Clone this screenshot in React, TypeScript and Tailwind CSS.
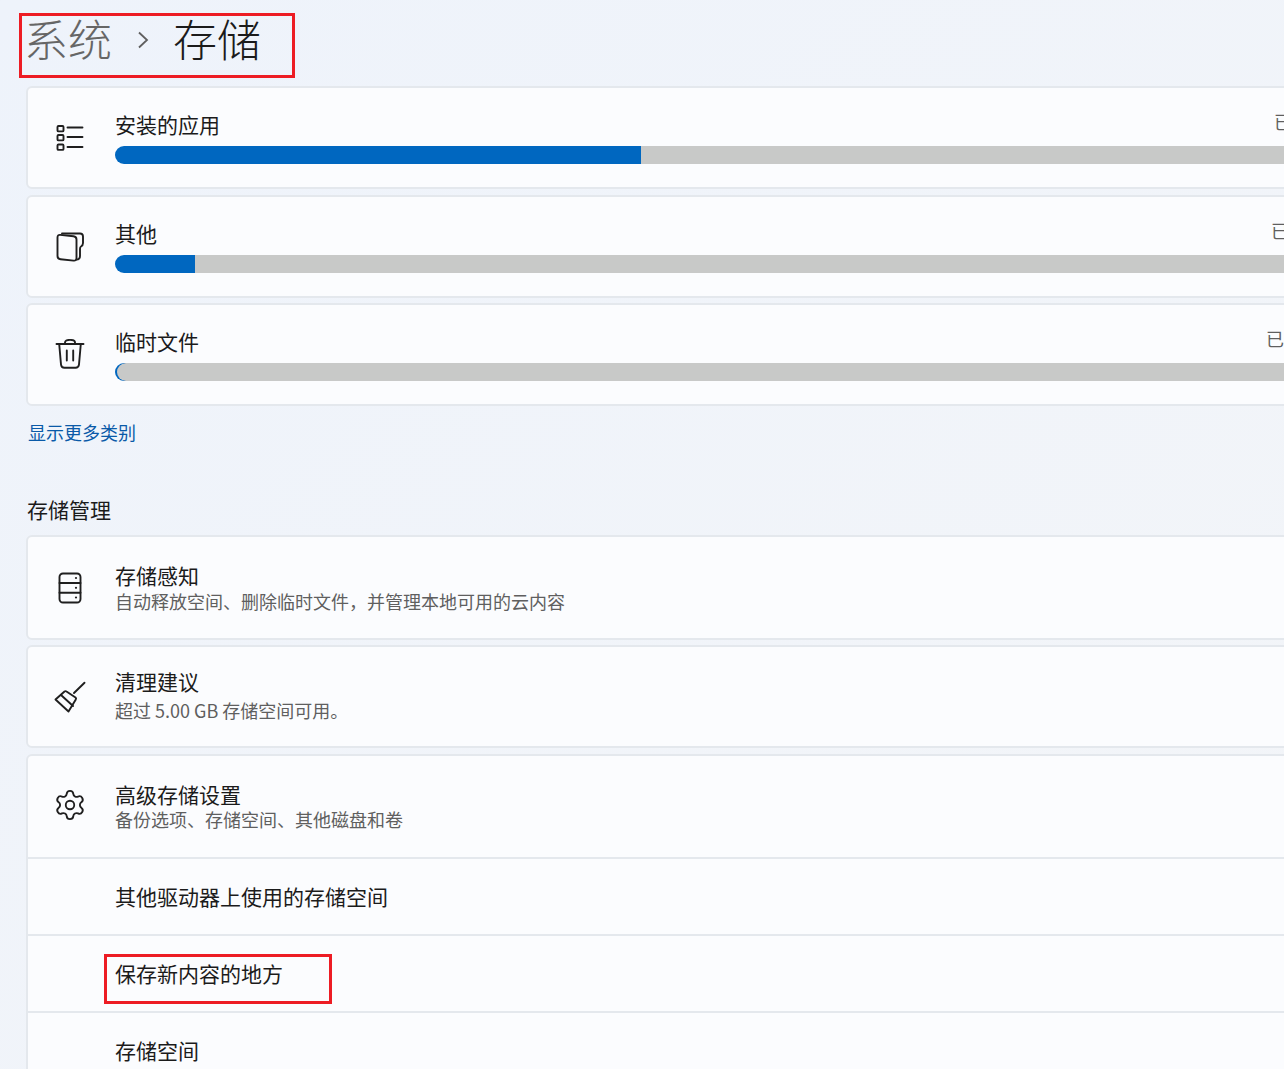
import React from "react";
import { Settings } from "lucide-react";

const font = { fontFamily: '"Noto Sans CJK SC", "Noto Sans", sans-serif' };

function Ic({ children }: { children: React.ReactNode }) {
  return (
    <svg viewBox="0 0 32 32" className="w-8 h-8 shrink-0" fill="none" stroke="#1f1f1f" strokeWidth="1.9" strokeLinecap="round" strokeLinejoin="round">
      {children}
    </svg>
  );
}

const ListIcon = () => (
  <Ic>
    <rect x="3.5" y="4" width="6" height="5.4" rx="1" />
    <rect x="3.5" y="13" width="6" height="5.4" rx="1" />
    <rect x="3.5" y="22.5" width="6" height="5.4" rx="1" />
    <path d="M13.5 5.5H28.5M13.5 15H28.5M13.5 25H28.5" />
  </Ic>
);
const FolderIcon = () => (
  <Ic>
    <path d="M3.5 6.5Q3.5 3.6 6.2 3.9L19.5 5.2Q22.5 5.6 22.5 8.5V27Q22.5 30 19.5 29.6L6.5 28.2Q3.5 27.9 3.5 25Z" />
    <path d="M8 2.5H26Q29 2.5 29 5.5V12Q29 14.5 27 15.5Q26 16 26 18V25Q26 28.5 22.5 28.5" />
  </Ic>
);
const TrashIcon = () => (
  <Ic>
    <path d="M2.5 5H29.5M11 5V3.5Q11 0.9 16 0.9Q21 0.9 21 3.5V5" />
    <path d="M5.2 5L7 25.5Q7.3 28.8 10.5 28.8H21.5Q24.7 28.8 25 25.5L26.8 5" />
    <path d="M12.8 11.5V21.5M19.2 11.5V21.5" />
  </Ic>
);
const ServerIcon = () => (
  <Ic>
    <rect x="5.5" y="1.5" width="21" height="29" rx="3.5" />
    <path d="M5.5 11H26.5M5.5 20.8H26.5" />
    <circle cx="22" cy="6" r="1.1" fill="#1f1f1f" stroke="none" />
    <circle cx="22" cy="15.8" r="1.1" fill="#1f1f1f" stroke="none" />
    <circle cx="22" cy="25.5" r="1.1" fill="#1f1f1f" stroke="none" />
  </Ic>
);
const BroomIcon = () => (
  <Ic>
    <path d="M30.5 1.7L20 12" />
    <path d="M1.5 18.5L10.5 10.5Q11.5 9.8 12.5 10.5L21.5 16.5Q22.5 17.5 21.8 18.5L14.5 30.5L1.5 18.5Z" />
    <path d="M7 14L19 25" />
  </Ic>
);
const GearIcon = () => <Settings size={34} strokeWidth={1.3} color="#1f1f1f" className="shrink-0 -mx-px mb-[3px]" />;

function Card({ className, children }: { className: string; children: React.ReactNode }) {
  return <div className={`w-[1400px] rounded-[6px] border-2 border-[#e4e8ed] bg-[#fbfcfe] ${className}`}>{children}</div>;
}

function UsageCard({ icon, title, pct, markPad, greyClass, className }: { icon: React.ReactNode; title: string; pct: number; markPad: string; greyClass: string; className: string }) {
  return (
    <Card className={`flex items-center pl-[26px] ${className}`}>
      {icon}
      <div className="ml-[29px] flex-1 min-w-0 self-start pt-[22px]">
        <div className="flex justify-between h-[28px] items-center">
          <span className="text-[21px] leading-[28px] text-[#1b1b1b]">{title}</span>
          <span className={`text-[18px] leading-[28px] text-[#5f5f5f] -mt-[6px] ${markPad}`}>已</span>
        </div>
        <div className="mt-[8px] h-[18px] bg-[#0067c0] rounded-l-[9px] overflow-hidden">
          <div className={`h-full bg-[#c8c9c8] ${greyClass}`} style={{ marginLeft: pct }} />
        </div>
      </div>
    </Card>
  );
}

function NavCard({ icon, title, sub, subGap, textClass, className }: { icon: React.ReactNode; title: string; sub: string; subGap: string; textClass: string; className: string }) {
  return (
    <div className={`flex items-center pl-[26px] ${className}`}>
      {icon}
      <div className={`ml-[29px] ${textClass}`}>
        <div className="text-[21px] leading-[28px] text-[#1b1b1b]">{title}</div>
        <div className={`text-[18px] leading-[24px] text-[#5f5f5f] ${subGap}`}>{sub}</div>
      </div>
    </div>
  );
}

function PlainRow({ title, className }: { title: string; className: string }) {
  return (
    <div className={`flex items-center pl-[87px] pb-[2px] border-t-2 border-[#e4e8ed] text-[21px] leading-[28px] text-[#1b1b1b] ${className}`}>
      {title}
    </div>
  );
}

export default function App() {
  return (
    <div style={font} className="relative w-[1284px] h-[1069px] overflow-hidden bg-linear-to-br from-[#eef3fb] to-[#f3f5f8]">
      <div className="pl-[26px]">
        <div className="h-[86px] -ml-[2px] flex items-start pt-[10px] font-light">
          <span className="text-[44px] leading-[56px] text-[#666666]">系统</span>
          <svg viewBox="0 0 12 18" className="w-[12px] h-[18px] ml-[25px] mt-[21px]" fill="none" stroke="#5f5f5f" strokeWidth="1.8">
            <path d="M2 1.5L10 9L2 16.5" />
          </svg>
          <span className="ml-[24px] text-[44px] leading-[56px] text-[#1b1b1b]">存储</span>
        </div>

        <UsageCard icon={<ListIcon />} title="安装的应用" pct={526} markPad="mr-[132px]" greyClass="" className="h-[103px]" />
        <UsageCard icon={<FolderIcon />} title="其他" pct={80} markPad="mr-[135px]" greyClass="" className="h-[103px] mt-[6px]" />
        <UsageCard icon={<TrashIcon />} title="临时文件" pct={2} markPad="mr-[140px]" greyClass="rounded-l-[9px]" className="h-[103px] mt-[5px]" />

        <div className="mt-[14px] ml-[2px] text-[18px] leading-[24px] text-[#0a5aa8]">显示更多类别</div>
        <div className="mt-[51px] ml-px text-[21px] leading-[28px] text-[#1b1b1b]">存储管理</div>

        <Card className="mt-[12px] h-[105px] flex items-center">
          <NavCard icon={<ServerIcon />} title="存储感知" sub="自动释放空间、删除临时文件，并管理本地可用的云内容" subGap="" textClass="mb-px" className="h-full w-full" />
        </Card>
        <Card className="mt-[5px] h-[103px] flex items-center">
          <NavCard icon={<BroomIcon />} title="清理建议" sub="超过 5.00 GB 存储空间可用。" subGap="mt-[3px]" textClass="mb-[4px]" className="h-full w-full" />
        </Card>
        <Card className="mt-[6px] h-[330px]">
          <NavCard icon={<GearIcon />} title="高级存储设置" sub="备份选项、存储空间、其他磁盘和卷" subGap="-mt-px" textClass="mb-[2px]" className="h-[101px]" />
          <PlainRow title="其他驱动器上使用的存储空间" className="h-[77px]" />
          <PlainRow title="保存新内容的地方" className="h-[77px]" />
          <PlainRow title="存储空间" className="h-[77px]" />
        </Card>
      </div>

      <div className="absolute left-[19px] top-[13px] w-[276px] h-[65px] border-[3px] border-[#ed1c24]" />
      <div className="absolute left-[104px] top-[954px] w-[228px] h-[50px] border-[3px] border-[#ed1c24]" />
    </div>
  );
}
